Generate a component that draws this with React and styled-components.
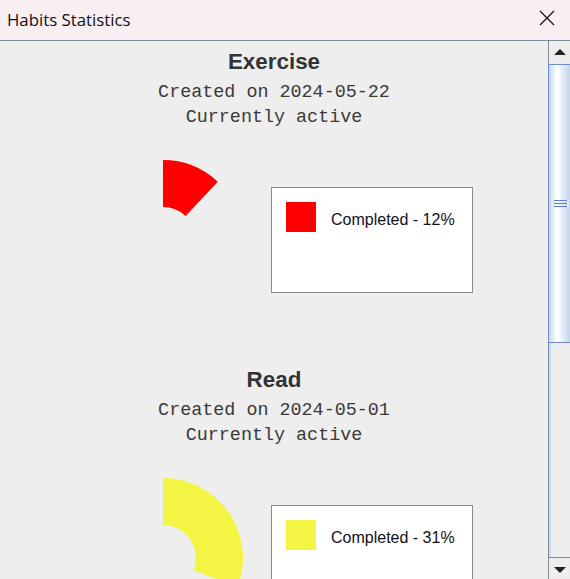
import React from "react";
import styled, { createGlobalStyle } from "styled-components";

const GlobalStyle = createGlobalStyle`
  html, body { margin: 0; padding: 0; overflow: hidden; background: #eeeeee; }
  * { box-sizing: border-box; }
`;

const Window = styled.div`
  width: 570px;
  height: 579px;
  display: flex;
  flex-direction: column;
  background: #eeeeee;
  overflow: hidden;
`;

const TitleBar = styled.div`
  height: 41px;
  flex: none;
  display: flex;
  align-items: center;
  justify-content: space-between;
  padding: 0 15px 0 7px;
  background: #f9eef2;
  border-bottom: 1px solid #7d8ca1;
`;

const TitleText = styled.span`
  font-family: "Open Sans", "Noto Sans", sans-serif;
  font-size: 16.8px;
  color: #111;
  margin-top: -2px;
`;

const CloseButton = styled.svg`
  width: 16px;
  height: 16px;
  margin-top: -4px;
`;

const Body = styled.div`
  flex: 1;
  min-height: 0;
  display: flex;
`;

const Content = styled.div`
  flex: 1;
  display: flex;
  flex-direction: column;
  overflow: hidden;
`;

const Section = styled.section`
  flex: none;
  height: 318px;
  padding-top: 8px;
  display: flex;
  flex-direction: column;
`;

const HabitName = styled.h2`
  margin: 0 0 5px;
  text-align: center;
  font-family: "Liberation Sans", Arial, sans-serif;
  font-weight: bold;
  font-size: 22.4px;
  line-height: 26px;
  color: #333333;
`;

const InfoLine = styled.div`
  text-align: center;
  font-family: "Liberation Mono", "Courier New", monospace;
  font-size: 18.4px;
  line-height: 25px;
  color: #3a3a3a;
`;

const ChartRow = styled.div`
  margin-top: 10px;
  height: 200px;
  display: flex;
  align-items: flex-start;
  gap: 8px;
  padding-left: 63px;
`;

const Pie = styled.svg`
  width: 200px;
  height: 200px;
  flex: none;
`;

const Legend = styled.div`
  margin-top: 47px;
  width: 202px;
  height: 106px;
  background: #ffffff;
  border: 1px solid #8a8a8a;
  padding: 14px;
  display: flex;
  align-items: flex-start;
  gap: 15px;
`;

const Swatch = styled.div`
  width: 30px;
  height: 30px;
  flex: none;
  background: ${(p) => p.$color};
`;

const LegendLabel = styled.span`
  font-family: "Liberation Sans", Arial, sans-serif;
  font-size: 16px;
  line-height: 30px;
  padding-top: 3px;
  color: #111;
  white-space: nowrap;
`;

const ScrollBar = styled.div`
  width: 22px;
  flex: none;
  display: flex;
  flex-direction: column;
  border-left: 1px solid #7d8ca1;
  background: #eeeeee;
`;

const ArrowButton = styled.div`
  height: ${(p) => p.$h}px;
  flex: none;
  display: flex;
  align-items: center;
  justify-content: center;
  background: #eeeeee;
  ${(p) => (p.$bottom ? "border-top: 1px solid #7d8ca1;" : "")}
`;

const Arrow = styled.div`
  width: 0;
  height: 0;
  border-left: 6px solid transparent;
  border-right: 6px solid transparent;
  ${(p) =>
    p.$down
      ? "border-top: 6px solid #222; margin-top: 2px;"
      : "border-bottom: 6px solid #222; margin-top: -2px;"}
`;

const Track = styled.div`
  flex: 1;
  display: flex;
  flex-direction: column;
  box-shadow: inset 2px 0 0 #c9d9ee;
`;

const Thumb = styled.div`
  height: 279px;
  flex: none;
  margin-left: -1px;
  border: 1px solid #6d8ccc;
  border-right: none;
  background: linear-gradient(
    to right,
    #c4d6ee 0%,
    #eef4fb 25%,
    #ffffff 40%,
    #e4edf8 65%,
    #c2d5ec 100%
  );
  display: flex;
  align-items: center;
  justify-content: flex-start;
  padding-left: 5px;
`;

const Grip = styled.div`
  width: 15px;
  display: flex;
  flex-direction: column;
  gap: 2px;
`;

const GripLine = styled.div`
  height: 1px;
  background: linear-gradient(to right, #5a7ec6 0 13px, #ffffff 13px);
`;

function donutPath(cx, cy, R, r, fraction) {
  const a0 = -Math.PI / 2;
  const a1 = a0 + fraction * Math.PI * 2;
  const large = fraction > 0.5 ? 1 : 0;
  const p = (rad, a) => [cx + rad * Math.cos(a), cy + rad * Math.sin(a)];
  const [ox0, oy0] = p(R, a0);
  const [ox1, oy1] = p(R, a1);
  const [ix1, iy1] = p(r, a1);
  const [ix0, iy0] = p(r, a0);
  return `M${ox0} ${oy0} A${R} ${R} 0 ${large} 1 ${ox1} ${oy1} L${ix1} ${iy1} A${r} ${r} 0 ${large} 0 ${ix0} ${iy0} Z`;
}

const habits = [
  { name: "Exercise", created: "2024-05-22", pct: 12, color: "#ff0000" },
  { name: "Read", created: "2024-05-01", pct: 31, color: "#f4f444" },
];

function HabitSection({ habit }) {
  return (
    <Section>
      <HabitName>{habit.name}</HabitName>
      <InfoLine>Created on {habit.created}</InfoLine>
      <InfoLine>Currently active</InfoLine>
      <ChartRow>
        <Pie viewBox="0 0 200 200">
          <path d={donutPath(100, 100, 80, 33, habit.pct / 100)} fill={habit.color} />
        </Pie>
        <Legend>
          <Swatch $color={habit.color} />
          <LegendLabel>Completed - {habit.pct}%</LegendLabel>
        </Legend>
      </ChartRow>
    </Section>
  );
}

export default function App() {
  return (
    <>
      <GlobalStyle />
      <Window>
        <TitleBar>
          <TitleText>Habits Statistics</TitleText>
          <CloseButton viewBox="0 0 16 16">
            <path d="M1 1 L15 15 M15 1 L1 15" stroke="#111" strokeWidth="1.2" fill="none" />
          </CloseButton>
        </TitleBar>
        <Body>
          <Content>
            {habits.map((h) => (
              <HabitSection key={h.name} habit={h} />
            ))}
          </Content>
          <ScrollBar>
            <ArrowButton $h={23}>
              <Arrow />
            </ArrowButton>
            <Track>
              <Thumb>
                <Grip>
                  <GripLine />
                  <GripLine />
                  <GripLine />
                </Grip>
              </Thumb>
            </Track>
            <ArrowButton $h={22} $bottom>
              <Arrow $down />
            </ArrowButton>
          </ScrollBar>
        </Body>
      </Window>
    </>
  );
}
